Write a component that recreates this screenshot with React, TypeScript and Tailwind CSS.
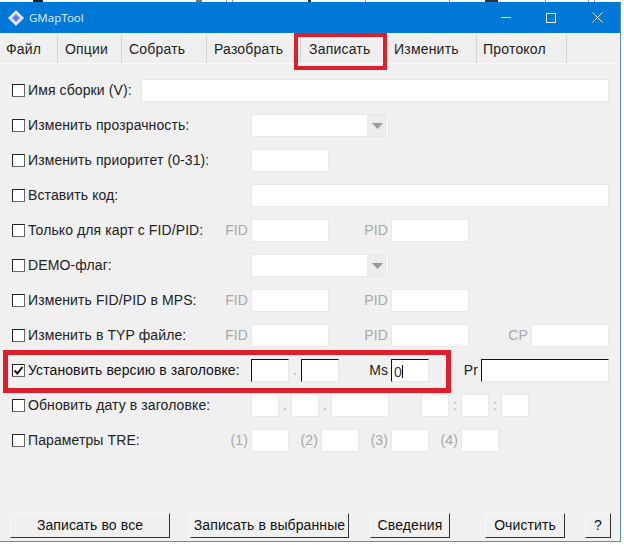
import type { ReactNode } from "react";

const tabs = [
  { label: "Файл", width: "w-[58px]", pad: "pl-[6px] border-r" },
  { label: "Опции", width: "w-[64px]", pad: "pl-[7px] border-r" },
  { label: "Собрать", width: "w-[85px]", pad: "pl-[7px] border-r" },
  { label: "Разобрать", width: "w-[93px]", pad: "pl-[7px]" },
  { label: "Записать", width: "w-[86px]", pad: "pl-[8px] border-l" },
  { label: "Изменить", width: "w-[91px]", pad: "pl-[8px] border-r" },
  { label: "Протокол", width: "w-[90px]", pad: "pl-[6px] border-r" },
];

function Check({ label, checked, width }: { label: string; checked?: boolean; width: string }) {
  return (
    <label className={`flex items-center shrink-0 ${width}`}>
      <span className="w-[13px] h-[13px] border border-[#222] border-r-[#666] border-b-[#666] bg-white mr-[3px] flex items-center justify-center shrink-0">
        {checked && (
          <svg viewBox="0 0 11 11" className="w-[11px] h-[11px]">
            <path d="M1.5 5.5 4.3 8.5 9.5 2" fill="none" stroke="#111" strokeWidth="2" />
          </svg>
        )}
      </span>
      <span className={checked ? "text-[#111]" : "text-[#222]"}>{label}</span>
    </label>
  );
}

function Field({ width, active }: { width: string; active?: boolean }) {
  return (
    <div
      className={`${width} h-[23px] bg-white border shrink-0 ${
        active ? "border-[#e6e6e6] border-t-[#111] border-l-[#111]" : "border-[#e8e8e8]"
      }`}
    />
  );
}

function Hint({ children, width, dark }: { children: ReactNode; width: string; dark?: boolean }) {
  return (
    <span className={`${width} shrink-0 text-right pr-[3px] ${dark ? "text-[#222]" : "text-[#a8a8a8]"}`}>{children}</span>
  );
}

function Sep({ children }: { children: ReactNode }) {
  return <span className="w-[12px] shrink-0 text-center text-[#a8a8a8]">{children}</span>;
}

function Select() {
  return (
    <div className="w-[138px] h-[23px] bg-white border border-[#e8e8e8] flex justify-end shrink-0">
      <div className="w-[20px] mr-[1px] bg-[#ececec] flex items-center justify-center">
        <svg viewBox="0 0 11 6" className="w-[11px] h-[6px]">
          <path d="M0 0h11L5.5 6z" fill="#9a9a9a" />
        </svg>
      </div>
    </div>
  );
}

function Row({ children }: { children: ReactNode }) {
  return <div className="flex items-center h-[35px] pl-[12px]">{children}</div>;
}

function Button({ label, width, ml }: { label: string; width: string; ml: string }) {
  return (
    <button
      className={`${width} ${ml} h-[25px] bg-[#f0f0f0] border border-[#f8f8f8] border-r-[#333] border-b-[#333] text-[14px] text-[#111]`}
    >
      {label}
    </button>
  );
}

export default function App() {
  return (
    <div className="w-[624px] h-[545px] bg-white overflow-hidden font-['Liberation_Sans',Arial,sans-serif] text-[14px] tracking-[0.1px] text-[#222]">
      {/* bits of the window behind, cut off at the top edge */}
      <div className="flex h-[2px]">
        <span className="ml-[33px] w-[10px] bg-[#222]" />
        <span className="ml-[153px] w-[6px] bg-[#777]" />
        <span className="ml-[24px] w-px bg-[#999]" />
        <span className="ml-[5px] w-px bg-[#999]" />
        <span className="ml-[75px] w-[3px] bg-[#333]" />
        <span className="ml-[54px] w-px bg-[#999]" />
        <span className="ml-[83px] w-px bg-[#999]" />
        <span className="ml-[35px] w-[13px] bg-[#333]" />
        <span className="ml-[47px] w-px bg-[#999]" />
        <span className="ml-[42px] w-px bg-[#999]" />
        <span className="ml-[5px] w-px bg-[#999]" />
      </div>

      <div className="relative w-[621px] h-[540px] bg-[#f0f0f0] border-r border-b border-[#5d8fb5] flex flex-col">
        <div className="h-[31px] bg-[#0078d7] flex items-center shrink-0">
          <svg viewBox="0 0 18 18" className="w-[18px] h-[18px] ml-[7px] mr-[4px]">
            <path d="M9 1l8 8-8 8-8-8z" fill="#dfe6ff" />
            <path d="M9 5l4 4-4 4-4-4z" fill="#6a78ee" />
          </svg>
          <span className="font-['Noto_Sans',sans-serif] text-[11.5px] tracking-normal text-[#d5e8f8]">GMapTool</span>
          <div className="ml-auto flex items-center text-white">
            <span className="w-[10px] h-px bg-[#cfe4f6] mr-[35px]" />
            <span className="w-[10px] h-[10px] border border-[#e3f0fa] mr-[36px]" />
            <svg viewBox="0 0 11 11" className="w-[11px] h-[11px] mr-[17px]">
              <path d="M.5.5l10 10M10.5.5l-10 10" stroke="#e3f0fa" fill="none" />
            </svg>
          </div>
        </div>

        <div className="flex h-[31px] pt-[2px] border-b border-[#fafafa] tracking-[0.2px] shrink-0">
          {tabs.map((tab) => (
            <div
              key={tab.label}
              className={`${tab.width} ${tab.pad} flex items-center border-[#d4d4d4] text-[#222] bg-[#efefef]`}
            >
              {tab.label}
            </div>
          ))}
        </div>

        <div className="flex flex-col pt-[9px]">
          <Row>
            <Check label="Имя сборки (V):" width="w-[129px]" />
            <Field width="w-[468px]" />
          </Row>
          <Row>
            <Check label="Изменить прозрачность:" width="w-[239px]" />
            <Select />
          </Row>
          <Row>
            <Check label="Изменить приоритет (0-31):" width="w-[239px]" />
            <Field width="w-[78px]" />
          </Row>
          <Row>
            <Check label="Вставить код:" width="w-[239px]" />
            <Field width="w-[358px]" />
          </Row>
          <Row>
            <Check label="Только для карт с FID/PID:" width="w-[211px]" />
            <Hint width="w-[28px]">FID</Hint>
            <Field width="w-[78px]" />
            <Hint width="w-[62px]">PID</Hint>
            <Field width="w-[78px]" />
          </Row>
          <Row>
            <Check label="DEMO-флаг:" width="w-[239px]" />
            <Select />
          </Row>
          <Row>
            <Check label="Изменить FID/PID в MPS:" width="w-[211px]" />
            <Hint width="w-[28px]">FID</Hint>
            <Field width="w-[78px]" />
            <Hint width="w-[62px]">PID</Hint>
            <Field width="w-[78px]" />
          </Row>
          <Row>
            <Check label="Изменить в TYP файле:" width="w-[211px]" />
            <Hint width="w-[28px]">FID</Hint>
            <Field width="w-[78px]" />
            <Hint width="w-[62px]">PID</Hint>
            <Field width="w-[78px]" />
            <Hint width="w-[62px]">CP</Hint>
            <Field width="w-[78px]" />
          </Row>
          <Row>
            <Check label="Установить версию в заголовке:" checked width="w-[239px]" />
            <Field width="w-[38px]" active />
            <Sep>.</Sep>
            <Field width="w-[38px]" active />
            <Hint width="w-[52px]" dark>Ms</Hint>
            <div className="relative">
              <Field width="w-[38px]" active />
              <span className="absolute left-[3px] top-[3px] text-[#333]">0</span>
              <span className="absolute left-[11px] top-[6px] w-px h-[13px] bg-black" />
            </div>
            <Hint width="w-[52px]" dark>Pr</Hint>
            <Field width="w-[128px]" active />
          </Row>
          <Row>
            <Check label="Обновить дату в заголовке:" width="w-[239px]" />
            <Field width="w-[28px]" />
            <Sep>.</Sep>
            <Field width="w-[28px]" />
            <Sep>.</Sep>
            <Field width="w-[58px]" />
            <span className="w-[32px] shrink-0" />
            <Field width="w-[28px]" />
            <Sep>:</Sep>
            <Field width="w-[28px]" />
            <Sep>:</Sep>
            <Field width="w-[28px]" />
          </Row>
          <Row>
            <Check label="Параметры TRE:" width="w-[211px]" />
            <Hint width="w-[28px]">(1)</Hint>
            <Field width="w-[38px]" />
            <Hint width="w-[32px]">(2)</Hint>
            <Field width="w-[38px]" />
            <Hint width="w-[32px]">(3)</Hint>
            <Field width="w-[38px]" />
            <Hint width="w-[32px]">(4)</Hint>
            <Field width="w-[38px]" />
          </Row>
        </div>

        <div className="flex mt-auto mb-[3px]">
          <Button label="Записать во все" width="w-[160px]" ml="ml-[10px]" />
          <Button label="Записать в выбранные" width="w-[159px]" ml="ml-[20px]" />
          <Button label="Сведения" width="w-[80px]" ml="ml-[21px]" />
          <Button label="Очистить" width="w-[80px]" ml="ml-[35px]" />
          <Button label="?" width="w-[26px]" ml="ml-[20px]" />
        </div>

        {/* red marks drawn over the screenshot */}
        <div className="absolute left-[294px] top-[31px] w-[93px] h-[37px] border-[4px] border-[#dc1f2b]" />
        <div className="absolute left-[3px] top-[348px] w-[448px] h-[43px] border-[5px] border-[#dc1f2b]" />
      </div>
    </div>
  );
}
